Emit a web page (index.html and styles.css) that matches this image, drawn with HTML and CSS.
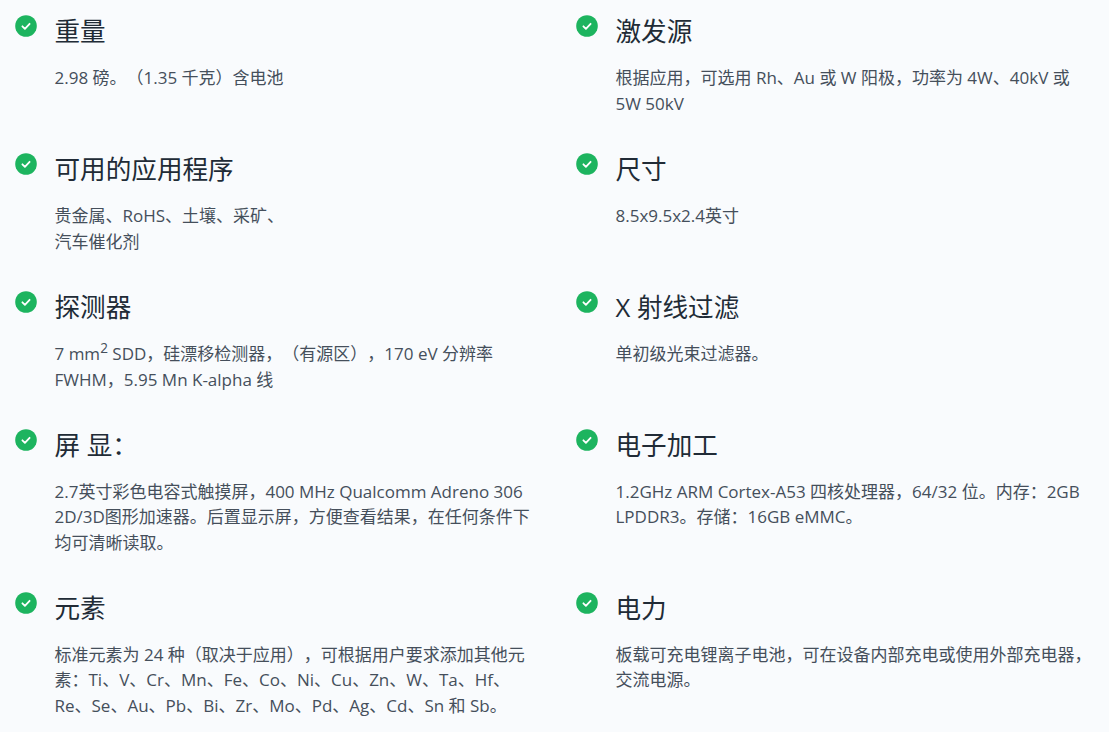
FILE: index.html
```html
<!DOCTYPE html>
<html lang="zh">
<head>
<meta charset="utf-8">
<link rel="stylesheet" href="styles.css">
<title>规格</title>
</head>
<body>
<svg width="0" height="0" class="defs"><symbol id="chk" viewBox="0 0 22 22"><circle cx="11" cy="11" r="10.8" fill="#1db45f"/><path d="M7.4 11.3l2.5 2.5 4.7-5" fill="none" stroke="#fff" stroke-width="1.8" stroke-linecap="round" stroke-linejoin="round"/></symbol></svg>
<main class="grid">
<section class="item"><svg class="ic"><use href="#chk"/></svg><div><h3>重量</h3><p>2.98 磅。（1.35 千克）含电池</p></div></section>
<section class="item"><svg class="ic"><use href="#chk"/></svg><div><h3>激发源</h3><p>根据应用，可选用 Rh、Au 或 W 阳极，功率为 4W、40kV 或 5W 50kV</p></div></section>
<section class="item"><svg class="ic"><use href="#chk"/></svg><div><h3>可用的应用程序</h3><p>贵金属、RoHS、土壤、采矿、<br>汽车催化剂</p></div></section>
<section class="item"><svg class="ic"><use href="#chk"/></svg><div><h3>尺寸</h3><p>8.5x9.5x2.4英寸</p></div></section>
<section class="item"><svg class="ic"><use href="#chk"/></svg><div><h3>探测器</h3><p>7 mm<sup>2</sup> SDD，硅漂移检测器，（有源区），170 eV 分辨率 FWHM，5.95 Mn K-alpha 线</p></div></section>
<section class="item"><svg class="ic"><use href="#chk"/></svg><div><h3>X 射线过滤</h3><p>单初级光束过滤器。</p></div></section>
<section class="item"><svg class="ic"><use href="#chk"/></svg><div><h3>屏 显：</h3><p>2.7英寸彩色电容式触摸屏，400 MHz Qualcomm Adreno 306 2D/3D图形加速器。后置显示屏，方便查看结果，在任何条件下均可清晰读取。</p></div></section>
<section class="item"><svg class="ic"><use href="#chk"/></svg><div><h3>电子加工</h3><p>1.2GHz ARM Cortex-A53 四核处理器，64/32 位。内存：2GB LPDDR3。存储：16GB eMMC。</p></div></section>
<section class="item"><svg class="ic"><use href="#chk"/></svg><div><h3>元素</h3><p>标准元素为 24 种（取决于应用），可根据用户要求添加其他元素：Ti、V、Cr、Mn、Fe、Co、Ni、Cu、Zn、W、Ta、Hf、Re、Se、Au、Pb、Bi、Zr、Mo、Pd、Ag、Cd、Sn 和 Sb。</p></div></section>
<section class="item"><svg class="ic"><use href="#chk"/></svg><div><h3>电力</h3><p>板载可充电锂离子电池，可在设备内部充电或使用外部充电器，交流电源。</p></div></section>
</main>
</body>
</html>
```
FILE: styles.css
```css
html, body { margin: 0; padding: 0; background: #f9fbfd; }
body { font-family: "Open Sans", "Noto Sans CJK SC", sans-serif; color: #454f5b; overflow: hidden; height: 732px; text-spacing-trim: space-all; }
.defs { position: absolute; }
.grid { display: grid; grid-template-columns: 561px 1fr; padding: 15px 15px 0 14.5px; grid-template-rows: 138px 138px 137.5px 163px 1fr; }
.item { display: flex; gap: 18px; align-items: flex-start; min-width: 0; }
.ic { width: 22px; height: 22px; flex: none; }
.item > div { width: 477px; min-width: 0; padding-top: 1px; }
h3 { margin: 0 0 17px; font-size: 25.6px; line-height: 32px; font-weight: 400; color: #212b36; }
p { margin: 0; font-size: 17px; line-height: 25.5px; }
sup { font-size: 13.6px; line-height: 0; }
```
